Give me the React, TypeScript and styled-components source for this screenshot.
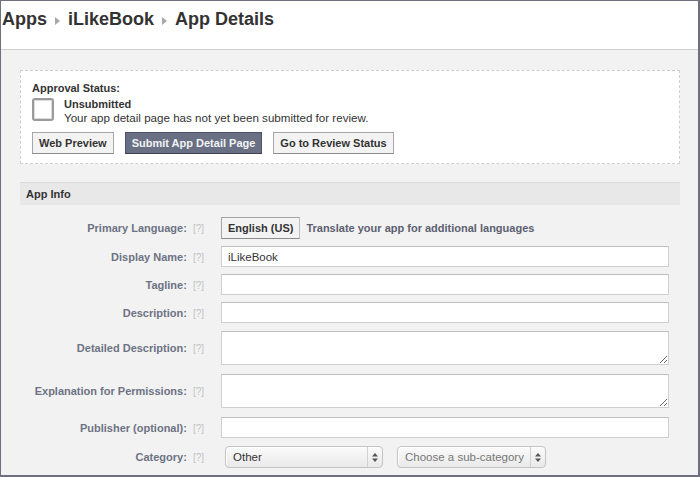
import * as React from "react";
import styled, { createGlobalStyle } from "styled-components";

const GlobalStyle = createGlobalStyle`
  html, body {
    margin: 0;
    padding: 0;
  }
  body {
    font-family: "Liberation Sans", Arial, sans-serif;
    font-size: 11px;
    color: #333;
  }
`;

const Frame = styled.div`
  width: 700px;
  height: 477px;
  box-sizing: border-box;
  border: 1px solid #6e7080;
  border-right-width: 2px;
  border-bottom-width: 2px;
  background: #f2f2f2;
  overflow: hidden;
  display: flex;
  flex-direction: column;
`;

const Header = styled.div`
  height: 49px;
  flex-shrink: 0;
  box-sizing: border-box;
  background: #fff;
  border-bottom: 1px solid #cfcfcf;
  display: flex;
  align-items: flex-start;
  padding: 8px 0 0 1px;
`;

const Crumbs = styled.h1`
  margin: 0;
  display: flex;
  align-items: center;
  gap: 8px;
  font-size: 18px;
  font-weight: bold;
  color: #333;
`;

const CrumbArrow = styled.span`
  width: 0;
  height: 0;
  border-top: 4px solid transparent;
  border-bottom: 4px solid transparent;
  border-left: 5px solid #a8a8a8;
  margin-top: 2px;
`;

const Content = styled.div`
  padding: 20px 18px 0 19px;
  display: flex;
  flex-direction: column;
`;

const StatusBox = styled.div`
  height: 94px;
  box-sizing: border-box;
  background: #fff;
  border: 1px dashed #cfcfcf;
  padding: 11px 11px 0 11px;
  display: flex;
  flex-direction: column;
`;

const StatusTitle = styled.div`
  font-weight: bold;
  color: #333;
`;

const StatusRow = styled.div`
  display: flex;
  align-items: flex-start;
  gap: 10px;
  margin-top: 3px;
`;

const StatusCheck = styled.span`
  width: 18px;
  height: 19px;
  border: 2px solid #9a9a9a;
  border-radius: 3px;
  background: #fff;
  box-shadow: inset 0 0 0 1px #dcdcdc;
  margin-top: 1px;
`;

const StatusText = styled.div`
  display: flex;
  flex-direction: column;
  line-height: 13px;
  margin-top: 1px;
`;

const StatusName = styled.span`
  font-weight: bold;
`;

const StatusNote = styled.span`
  font-size: 11.6px;
`;

const ButtonRow = styled.div`
  display: flex;
  gap: 11px;
  margin-top: 8px;
`;

const Button = styled.button<{ $primary?: boolean }>`
  height: 22px;
  box-sizing: border-box;
  padding: 0 6px;
  font-family: inherit;
  font-size: 11px;
  font-weight: bold;
  color: ${(p) => (p.$primary ? "#f2f3f6" : "#333")};
  background: ${(p) => (p.$primary ? "#6a7083" : "#f3f3f3")};
  border: 1px solid ${(p) => (p.$primary ? "#4e5264" : "#a6a6a6")};
  border-bottom-color: ${(p) => (p.$primary ? "#3d4050" : "#8c8c8c")};
  cursor: pointer;
`;

const Section = styled.div`
  margin-top: 18px;
  display: flex;
  flex-direction: column;
`;

const SectionHead = styled.div`
  height: 23px;
  box-sizing: border-box;
  background: #e8e8e8;
  border-top: 1px solid #dadada;
  padding: 0 0 0 6px;
  display: flex;
  align-items: center;
  font-weight: bold;
  color: #333;
`;

const Form = styled.div`
  display: grid;
  grid-template-columns: 184px 1fr;
  column-gap: 17px;
  row-gap: 7px;
  padding: 12px 11px 0 0;
  align-items: center;
`;

const Label = styled.div<{ $shift?: number }>`
  text-align: right;
  font-weight: bold;
  color: #6d7384;
  white-space: nowrap;
  margin-top: ${(p) => p.$shift ?? 0}px;
`;

const Help = styled.span`
  font-weight: normal;
  color: #c2c2c2;
  margin-left: 6px;
  font-size: 10px;
`;

const Field = styled.div<{ $shift?: number }>`
  display: flex;
  align-items: center;
  gap: 6px;
  margin-top: ${(p) => p.$shift ?? 0}px;
`;

const LangButton = styled.button`
  height: 22px;
  box-sizing: border-box;
  padding: 0 6px;
  font-family: inherit;
  font-size: 11px;
  font-weight: bold;
  color: #333;
  background: #f3f3f3;
  border: 1px solid #a6a6a6;
  border-right-color: #bdbdbd;
  border-bottom-color: #8c8c8c;
`;

const LangNote = styled.span`
  font-weight: bold;
  color: #5c6070;
`;

const TextInput = styled.input`
  width: 100%;
  height: 21px;
  box-sizing: border-box;
  border: 1px solid #cfcfcf;
  border-top-color: #bfbfbf;
  background: #fff;
  padding: 0 6px;
  font-family: inherit;
  font-size: 11.5px;
  color: #333;
  outline: none;
`;

const TextArea = styled.textarea`
  width: 100%;
  height: 34px;
  box-sizing: border-box;
  border: 1px solid #cfcfcf;
  border-top-color: #bfbfbf;
  background: #fff;
  padding: 3px 6px;
  font-family: inherit;
  font-size: 11px;
  resize: vertical;
  display: block;
  outline: none;
`;

const SelectBox = styled.div<{ $width: number; $muted?: boolean; $offset: number }>`
  width: ${(p) => p.$width}px;
  height: 22px;
  margin-left: ${(p) => p.$offset}px;
  box-sizing: border-box;
  border: 1px solid #c4c4c4;
  border-radius: 4px;
  background: linear-gradient(#fbfbfb, #e9e9e9);
  box-shadow: inset 1px 1px 0 #fff;
  display: flex;
  align-items: center;
  font-size: 11.5px;
  color: ${(p) => (p.$muted ? "#777" : "#333")};
`;

const SelectText = styled.span`
  flex: 1;
  padding-left: 7px;
  white-space: nowrap;
  overflow: hidden;
`;

const SelectArrows = styled.span`
  width: 14px;
  height: 100%;
  border-left: 1px solid #d2d2d2;
  display: flex;
  align-items: center;
  justify-content: center;
`;

const Arrows = () => (
  <svg width="6" height="9" viewBox="0 0 6 9">
    <path d="M3 0 L6 3.5 L0 3.5 Z" fill="#555" />
    <path d="M3 9 L6 5.5 L0 5.5 Z" fill="#555" />
  </svg>
);

const Row = ({ label, shift }: { label: string; shift?: number }) => (
  <Label $shift={shift}>
    {label}
    <Help>[?]</Help>
  </Label>
);

export default function App() {
  return (
    <>
      <GlobalStyle />
      <Frame>
        <Header>
          <Crumbs>
            <span>Apps</span>
            <CrumbArrow />
            <span>iLikeBook</span>
            <CrumbArrow />
            <span>App Details</span>
          </Crumbs>
        </Header>
        <Content>
          <StatusBox>
            <StatusTitle>Approval Status:</StatusTitle>
            <StatusRow>
              <StatusCheck />
              <StatusText>
                <StatusName>Unsubmitted</StatusName>
                <StatusNote>Your app detail page has not yet been submitted for review.</StatusNote>
              </StatusText>
            </StatusRow>
            <ButtonRow>
              <Button>Web Preview</Button>
              <Button $primary>Submit App Detail Page</Button>
              <Button>Go to Review Status</Button>
            </ButtonRow>
          </StatusBox>

          <Section>
            <SectionHead>App Info</SectionHead>
            <Form>
              <Row label="Primary Language:" />
              <Field>
                <LangButton>English (US)</LangButton>
                <LangNote>Translate your app for additional languages</LangNote>
              </Field>

              <Row label="Display Name:" />
              <Field>
                <TextInput defaultValue="iLikeBook" />
              </Field>

              <Row label="Tagline:" />
              <Field>
                <TextInput />
              </Field>

              <Row label="Description:" />
              <Field>
                <TextInput />
              </Field>

              <Row label="Detailed Description:" shift={1} />
              <Field $shift={1}>
                <TextArea />
              </Field>

              <Row label="Explanation for Permissions:" shift={2} />
              <Field $shift={2}>
                <TextArea />
              </Field>

              <Row label="Publisher (optional):" shift={2} />
              <Field $shift={2}>
                <TextInput />
              </Field>

              <Row label="Category:" shift={1} />
              <Field $shift={1}>
                <SelectBox $width={158} $offset={4}>
                  <SelectText>Other</SelectText>
                  <SelectArrows>
                    <Arrows />
                  </SelectArrows>
                </SelectBox>
                <SelectBox $width={149} $offset={8} $muted>
                  <SelectText>Choose a sub-category</SelectText>
                  <SelectArrows>
                    <Arrows />
                  </SelectArrows>
                </SelectBox>
              </Field>
            </Form>
          </Section>
        </Content>
      </Frame>
    </>
  );
}
